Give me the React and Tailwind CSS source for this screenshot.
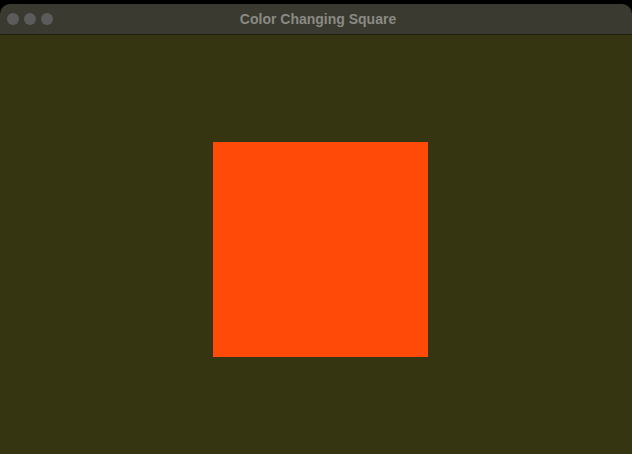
export default function App() {
  return (
    <div className="w-[632px] h-[454px] bg-black flex flex-col overflow-hidden" style={{ fontFamily: '"Liberation Sans", Arial, sans-serif' }}>
      <div className="h-[4px] bg-black" />
      <div className="h-[31px] bg-[#3a3a30] rounded-t-[10px] flex items-center relative border-b border-[#1e1e14]">
        <div className="flex gap-[5px] pl-[7px]">
          <div className="w-[12px] h-[12px] rounded-full bg-[#5c5c5c]" />
          <div className="w-[12px] h-[12px] rounded-full bg-[#5c5c5c]" />
          <div className="w-[12px] h-[12px] rounded-full bg-[#5c5c5c]" />
        </div>
        <div className="absolute inset-0 flex items-center justify-center pl-[4px] text-[14px] font-bold text-[#8a8a84]">
          Color Changing Square
        </div>
      </div>
      <div className="flex-1 bg-[#363512] flex justify-center pt-[107px] pl-[9px]">
        <div className="w-[215px] h-[215px] bg-[#ff4a08]" />
      </div>
    </div>
  );
}
